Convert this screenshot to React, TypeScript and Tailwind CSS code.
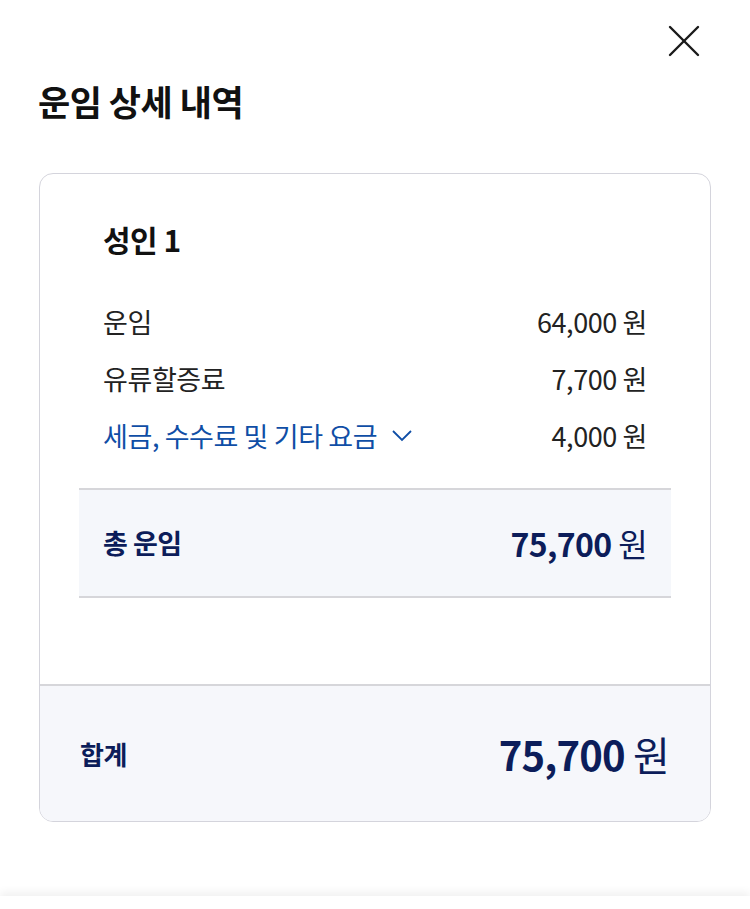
import React from "react";

export default function App() {
  const font = { fontFamily: '"Noto Sans CJK KR", "Noto Sans", sans-serif' };
  return (
    <div className="relative h-[909px] w-full overflow-hidden bg-white text-[#1a1a1a]" style={font}>
      <div className="flex justify-end pr-[50px] pt-[25px]">
        <svg width="32" height="32" viewBox="0 0 32 32" fill="none" stroke="#1a1a1a" strokeWidth="2.4" strokeLinecap="round">
          <path d="M2 2 L30 30" />
          <path d="M30 2 L2 30" />
        </svg>
      </div>
      <h1 className="ml-[38px] mt-[22px] text-[35px] font-bold leading-[44px] tracking-[-0.5px] text-[#111]">운임 상세 내역</h1>
      <div className="mx-[39px] mt-[50px] overflow-hidden rounded-[14px] border border-[#d4d4dc]">
        <div className="pt-[46px]">
          <div className="px-[63px] text-[30px] font-bold leading-[38px] tracking-[-0.5px] text-[#111]">성인 1</div>
          <div className="mt-[47px] flex flex-col gap-[23px] px-[63px] text-[27px] leading-[34px] tracking-[-0.4px]">
            <div className="flex items-center justify-between">
              <span className="text-[#222]">운임</span>
              <span className="text-[#222]">64,000 원</span>
            </div>
            <div className="flex items-center justify-between">
              <span className="text-[#222]">유류할증료</span>
              <span className="text-[#222]">7,700 원</span>
            </div>
            <div className="flex items-center justify-between">
              <span className="flex items-center gap-[15px] text-[#0f4ea6]">
                세금, 수수료 및 기타 요금
                <svg width="20" height="12" viewBox="0 0 20 12" fill="none" stroke="#0f4ea6" strokeWidth="1.8">
                  <path d="M1 1 L10 10 L19 1" />
                </svg>
              </span>
              <span className="text-[#222]">4,000 원</span>
            </div>
          </div>
          <div className="mx-[39px] mt-[35px] flex h-[110px] items-center justify-between border-y-2 border-[#d6d6da] bg-[#f5f7fb] pl-[24px] pr-[24px] text-[#0c1d5a]">
            <span className="text-[27px] font-bold tracking-[-0.5px]">총 운임</span>
            <span className="text-[32px] tracking-[-0.6px]">
              <span className="font-bold">75,700</span> <span className="font-normal">원</span>
            </span>
          </div>
          <div className="h-[86px]" />
        </div>
        <div className="flex h-[137px] items-center justify-between border-t-2 border-[#d6d6da] bg-[#f6f7fb] pl-[40px] pr-[41px] text-[#0c1d5a]">
          <span className="text-[26px] font-bold tracking-[-0.5px]">합계</span>
          <span className="text-[40px] tracking-[-0.8px]">
            <span className="font-bold">75,700</span> <span className="font-normal">원</span>
          </span>
        </div>
      </div>
      <div className="absolute bottom-0 left-0 right-0 h-[13px] bg-white shadow-[0_-4px_8px_rgba(0,0,0,0.06)]" />
    </div>
  );
}
